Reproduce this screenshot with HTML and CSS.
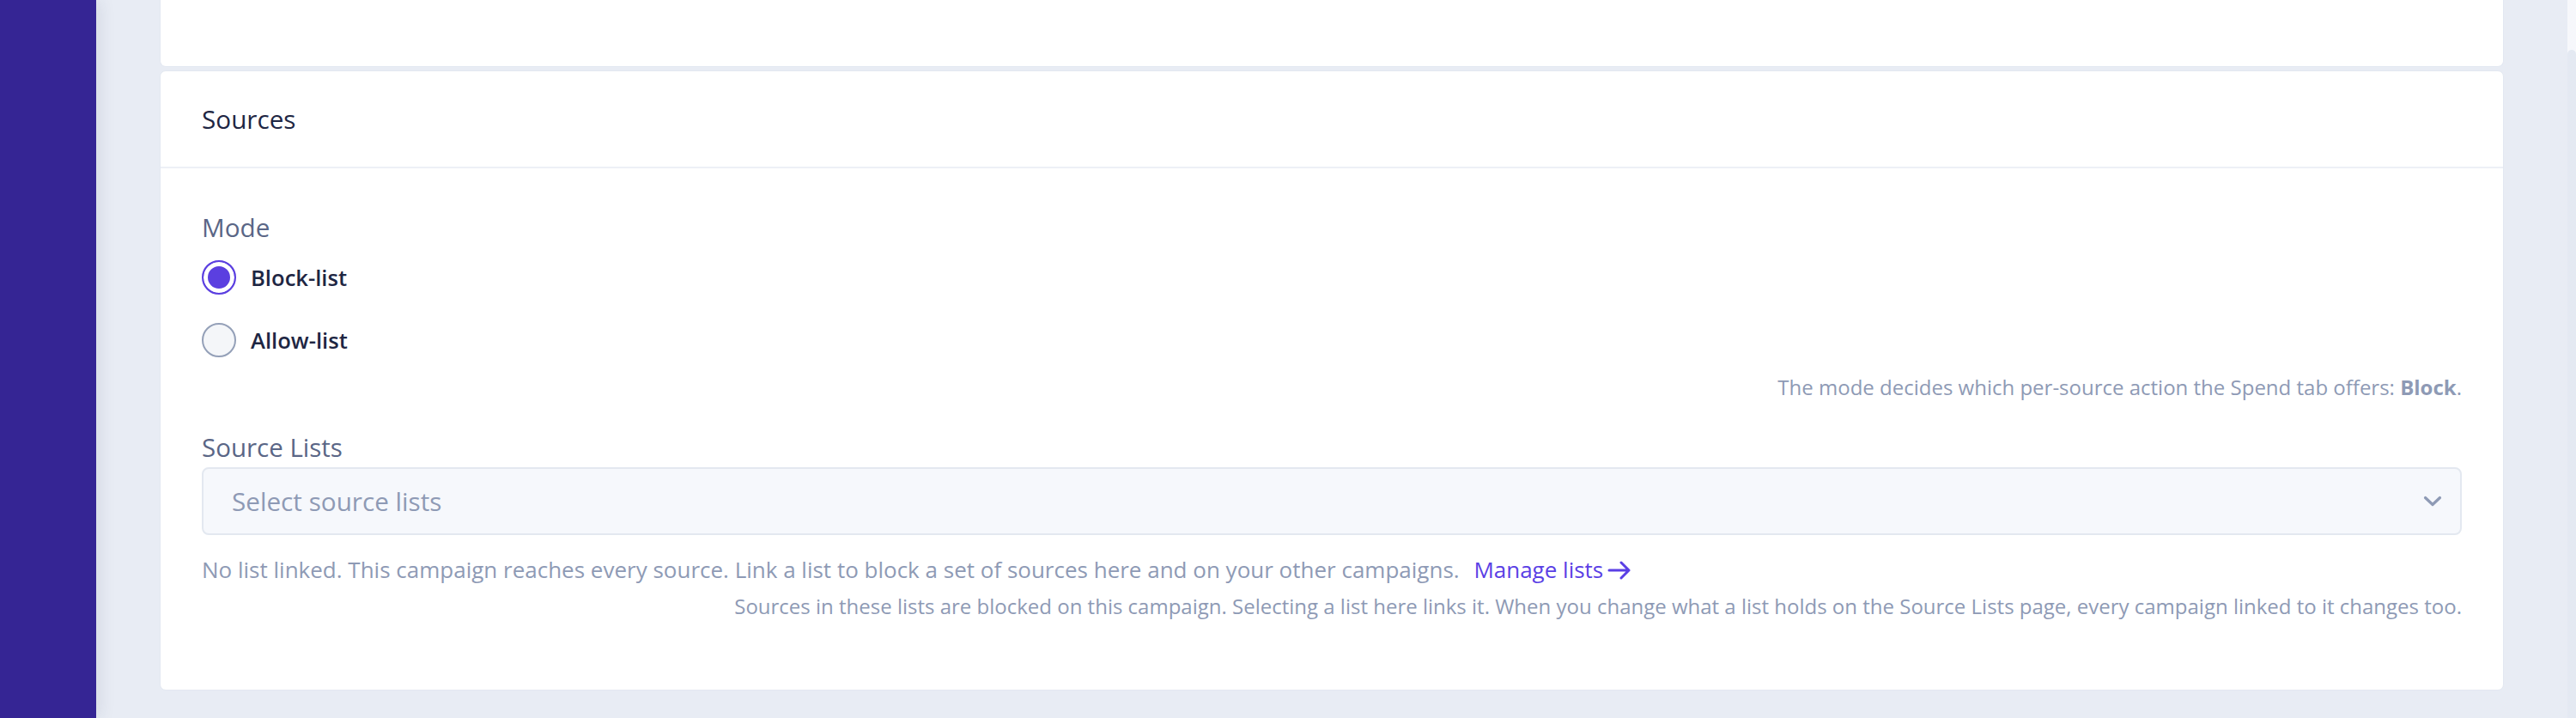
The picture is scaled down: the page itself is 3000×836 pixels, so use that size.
FILE: index.html
```html
<!DOCTYPE html>
<html lang="en">
<head>
    <meta charset="UTF-8">
    <meta name="viewport" content="width=device-width, initial-scale=1.0">
    <title>Campaign settings</title>
    <link rel="stylesheet" href="styles.css">
</head>
<body>
    <aside class="sidebar"></aside>

    <main class="content">
        <!-- previous section, scrolled mostly out of view -->
        <section class="card card-top"></section>

        <section class="card">
            <div class="card-header">Sources</div>
            <div class="card-body">
                <div class="field-label">Mode</div>
                <div class="radio-group">
                    <label class="radio-row">
                        <span class="radio checked"></span>
                        <span class="radio-text">Block-list</span>
                    </label>
                    <label class="radio-row">
                        <span class="radio"></span>
                        <span class="radio-text">Allow-list</span>
                    </label>
                </div>
                <p class="hint">The mode decides which per-source action the Spend tab offers: <strong>Block</strong>.</p>

                <div class="field-label lists">Source Lists</div>
                <div class="select">
                    <span class="placeholder">Select source lists</span>
                    <svg class="chevron" width="22" height="13" viewBox="0 0 22 13">
                        <path d="M2.5 2.5 L11 10.5 L19.5 2.5" fill="none" stroke="currentColor" stroke-width="3.2" stroke-linecap="round" stroke-linejoin="round"/>
                    </svg>
                </div>
                <p class="help">No list linked. This campaign reaches every source. Link a list to block a set of sources here and on your other campaigns. <a href="#" class="link">Manage lists<svg class="arrow" width="28" height="22" viewBox="0 0 28 22">
                    <path d="M2 11 H25 M16 2 L25 11 L16 20" fill="none" stroke="currentColor" stroke-width="3" stroke-linecap="round" stroke-linejoin="round"/>
                </svg></a></p>
                <p class="hint">Sources in these lists are blocked on this campaign. Selecting a list here links it. When you change what a list holds on the Source Lists page, every campaign linked to it changes too.</p>
            </div>
        </section>
    </main>

    <div class="scrollbar"><div class="thumb"></div></div>
</body>
</html>
```

FILE: styles.css
```css
* {
    box-sizing: border-box;
}
html, body {
    height: 100%;
}
body {
    margin: 0;
    display: flex;
    font-family: "Open Sans", "Noto Sans", sans-serif;
    background-color: #e8ecf4;
    color: #1e2643;
    overflow: hidden;
}
.sidebar {
    width: 112px;
    flex-shrink: 0;
    background-color: #352594;
    box-shadow: 4px 0 18px rgba(40, 50, 90, 0.10);
    position: relative;
    z-index: 1;
}
.content {
    flex: 1;
    padding: 0 74px;
}
.scrollbar {
    width: 10px;
    flex-shrink: 0;
    display: flex;
    flex-direction: column;
    padding-top: 58px;
    background-color: #f6f7fb;
}
.scrollbar .thumb {
    flex: 1;
    background-color: #e4e9f2;
    border-radius: 5px 5px 0 0;
}
.card {
    background-color: #fff;
    border: 1px solid #e3e8f1;
    border-radius: 7px;
    margin-bottom: 4px;
}
.card-top {
    height: 78px;
    border-top: none;
    border-radius: 0 0 7px 7px;
}
.card-header {
    font-size: 29.7px;
    line-height: 46px;
    padding: 32.5px 48px;
    border-bottom: 2px solid #edf0f6;
}
.card-body {
    padding: 46px 48px 79px;
}
.field-label {
    font-size: 29.7px;
    line-height: 46px;
    color: #5a6686;
}
.field-label.lists {
    font-size: 29.5px;
    line-height: 43px;
    margin-top: 30px;
    margin-bottom: 1.6px;
}
.radio-group {
    display: flex;
    flex-direction: column;
    gap: 33px;
    margin-top: 15px;
}
.radio-row {
    display: flex;
    align-items: center;
    gap: 17px;
    height: 40px;
    cursor: pointer;
}
.radio {
    width: 40px;
    height: 40px;
    border-radius: 50%;
    border: 2.5px solid #94a0b8;
    background-color: #f4f6f9;
    flex-shrink: 0;
}
.radio.checked {
    border-color: #5b3fe0;
    background-color: #5b3fe0;
    box-shadow: inset 0 0 0 5px #fff;
}
.radio-text {
    font-size: 25.6px;
    font-weight: 600;
}
.hint {
    margin: 16px 0 0;
    font-size: 24px;
    line-height: 37.3px;
    color: #8e9ab5;
    text-align: right;
}
.hint strong {
    font-weight: 700;
}
.select {
    display: flex;
    align-items: center;
    justify-content: space-between;
    height: 79px;
    padding: 0 21px 0 33px;
    background-color: #f6f8fc;
    border: 2px solid #e3e8f0;
    border-radius: 8px;
    color: #8e9ab5;
}
.placeholder {
    font-size: 29.7px;
}
.help {
    margin: 20px 0 0;
    font-size: 26px;
    line-height: 40.2px;
    color: #8e9ab5;
}
.help + .hint {
    margin-top: 4px;
}
.link {
    color: #5a3fe5;
    text-decoration: none;
    margin-left: 10px;
    white-space: nowrap;
}
.arrow {
    margin-left: 5px;
    vertical-align: -2px;
}
```
